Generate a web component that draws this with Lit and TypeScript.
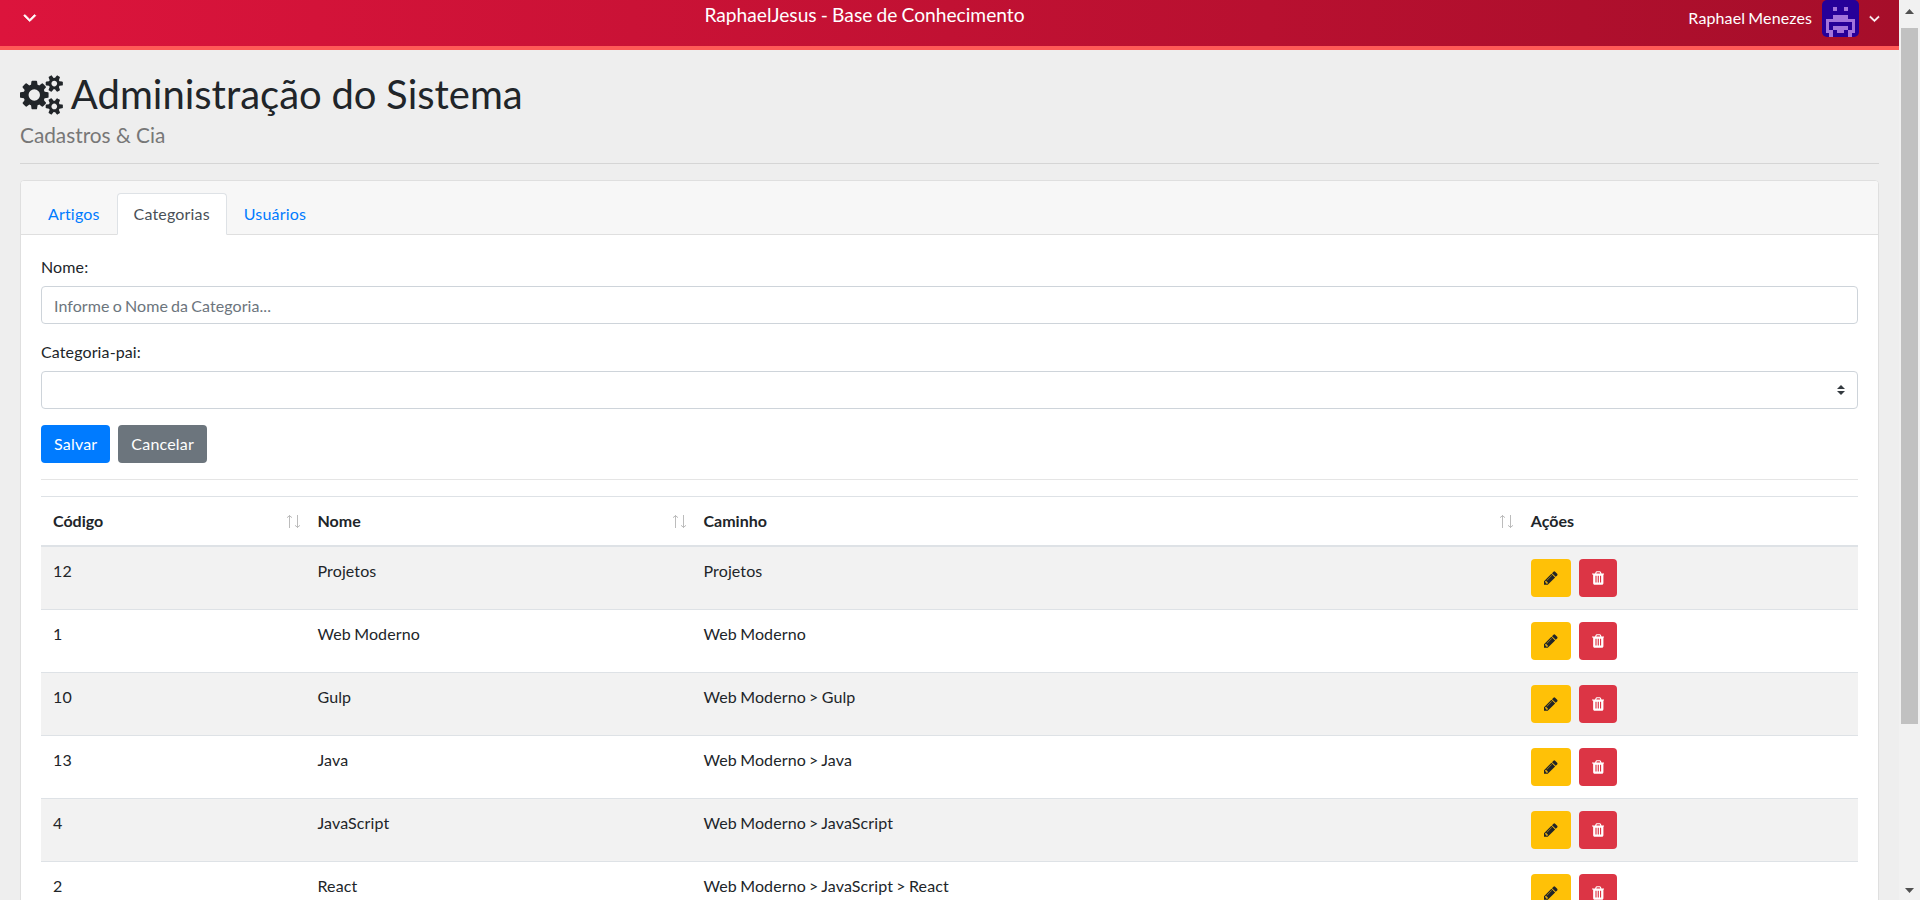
import { LitElement, html, css, svg } from "lit";
import { customElement, property } from "lit/decorators.js";

const ICONS: Record<string, { box: string; path: string }> = {
  angle: {
    box: "320 0 1152 1792",
    path: "M1395 736q0 13-10 23l-466 466q-10 10-23 10t-23-10l-466-466q-10-10-10-23t10-23l50-50q10-10 23-10t23 10l393 393 393-393q10-10 23-10t23 10l50 50q10 10 10 23z",
  },
  pencil: {
    box: "128 0 1536 1792",
    path: "M491 1536l91-91-235-235-91 91v107h128v128h107zm523-928q0-22-22-22-10 0-17 7l-542 542q-7 7-7 17 0 22 22 22 10 0 17-7l542-542q7-7 7-17zm-54-192l416 416-832 832h-416v-416zm683 96q0 53-37 90l-166 166-416-416 166-165q36-38 90-38 53 0 91 38l235 234q37 39 37 91z",
  },
  trash: {
    box: "192 0 1408 1792",
    path: "M704 1376v-704q0-14-9-23t-23-9h-64q-14 0-23 9t-9 23v704q0 14 9 23t23 9h64q14 0 23-9t9-23zm256 0v-704q0-14-9-23t-23-9h-64q-14 0-23 9t-9 23v704q0 14 9 23t23 9h64q14 0 23-9t9-23zm256 0v-704q0-14-9-23t-23-9h-64q-14 0-23 9t-9 23v704q0 14 9 23t23 9h64q14 0 23-9t9-23zm-544-992h448l-48-117q-7-9-17-11h-317q-10 2-17 11zm928 32v64q0 14-9 23t-23 9h-96v948q0 83-47 143.5t-113 60.5h-832q-66 0-113-58.5t-47-141.5v-952h-96q-14 0-23-9t-9-23v-64q0-14 9-23t23-9h309l70-167q15-37 54-63t79-26h320q40 0 79 26t54 63l70 167h309q14 0 23 9t9 23z",
  },
  cogs: {
    box: "0 0 1920 1792",
    path: "M896 896q0-106-75-181t-181-75-181 75-75 181 75 181 181 75 181-75 75-181zm768 512q0-52-38-90t-90-38-90 38-38 90q0 53 37.5 90.5t90.5 37.5 90.5-37.5 37.5-90.5zm0-1024q0-52-38-90t-90-38-90 38-38 90q0 53 37.5 90.5t90.5 37.5 90.5-37.5 37.5-90.5zm-384 421v185q0 10-7 19.5t-16 10.5l-155 24q-11 35-32 76 34 48 90 115 7 11 7 20 0 12-7 19-23 30-82.5 89.5t-78.5 59.5q-11 0-21-7l-115-90q-37 19-77 31-11 108-23 155-7 24-30 24h-186q-11 0-20-7.5t-10-17.5l-23-153q-34-10-75-31l-118 89q-7 7-20 7-11 0-21-8-144-133-144-160 0-9 7-19 10-14 41-53t47-61q-23-44-35-82l-152-24q-10-1-17-9.5t-7-19.5v-185q0-10 7-19.5t16-10.5l155-24q11-35 32-76-34-48-90-115-7-11-7-20 0-12 7-20 22-30 82-89t79-59q11 0 21 7l115 90q34-18 77-32 11-108 23-154 7-24 30-24h186q11 0 20 7.5t10 17.5l23 153q34 10 75 31l118-89q8-7 20-7 11 0 21 8 144 133 144 160 0 8-7 19-12 16-42 54t-45 60q23 48 34 82l152 23q10 2 17 10.5t7 19.5zm640 533v140q0 16-149 31-12 27-30 52 51 113 51 138 0 4-4 7-122 71-124 71-8 0-46-47t-52-68q-20 2-30 2t-30-2q-14 21-52 68t-46 47q-2 0-124-71-4-3-4-7 0-25 51-138-18-25-30-52-149-15-149-31v-140q0-16 149-31 13-29 30-52-51-113-51-138 0-4 4-7 4-2 35-20t59-34 30-16q8 0 46 46.5t52 67.5q20-2 30-2t30 2q51-71 92-112l6-2q4 0 124 70 4 3 4 7 0 25-51 138 17 23 30 52 149 15 149 31zm0-1024v140q0 16-149 31-12 27-30 52 51 113 51 138 0 4-4 7-122 71-124 71-8 0-46-47t-52-68q-20 2-30 2t-30-2q-14 21-52 68t-46 47q-2 0-124-71-4-3-4-7 0-25 51-138-18-25-30-52-149-15-149-31v-140q0-16 149-31 13-29 30-52-51-113-51-138 0-4 4-7 4-2 35-20t59-34 30-16q8 0 46 46.5t52 67.5q20-2 30-2t30 2q51-71 92-112l6-2q4 0 124 70 4 3 4 7 0 25-51 138 17 23 30 52 149 15 149 31z",
  },
};

@customElement("fa-icon")
export class FaIcon extends LitElement {
  @property() name = "angle";

  static styles = css`
    :host {
      display: inline-flex;
      height: 1em;
    }
    .glyph {
      display: block;
      height: 1em;
      width: auto;
      fill: currentColor;
    }
    .angle {
      stroke: currentColor;
      stroke-width: 70px;
    }
  `;

  render() {
    const icon = ICONS[this.name];
    return html`<svg class="glyph ${this.name}" viewBox=${icon.box}>${svg`<path d=${icon.path}></path>`}</svg>`;
  }
}

const FACE = [
  "..........",
  "..........",
  "...#..#...",
  "..........",
  "...####...",
  ".########.",
  ".#......#.",
  ".#.####.#.",
  ".##.##.##.",
  "..#....#..",
];

@customElement("user-avatar")
export class UserAvatar extends LitElement {
  static styles = css`
    :host {
      display: block;
      width: 37px;
      height: 37px;
      border-radius: 5px;
      overflow: hidden;
      background: #260099;
    }
    .face {
      display: block;
    }
  `;

  render() {
    return html`
      <svg class="face" width="37" height="37" viewBox="0 0 10 10" fill="#a274dc" shape-rendering="crispEdges">
        ${FACE.flatMap((line, y) =>
          [...line].map((c, x) => (c === "#" ? svg`<rect x=${x} y=${y} width="1" height="1"></rect>` : null)),
        )}
      </svg>
    `;
  }
}

@customElement("app-header")
export class AppHeader extends LitElement {
  static styles = css`
    :host {
      display: block;
    }
    .bar {
      box-sizing: border-box;
      height: 50px;
      display: grid;
      grid-template-columns: 60px 1fr 230px;
      align-items: start;
      background: linear-gradient(to right, #dc143c, #a60e2a) padding-box;
      border-bottom: 4px solid #ff5a57;
      color: #fff;
    }
    .toggle {
      display: flex;
      padding: 7px 0 0 23px;
      font-size: 21px;
    }
    .title {
      margin: 0;
      font-size: 19.2px;
      font-weight: 400;
      line-height: 30px;
      letter-spacing: 0;
      word-spacing: -0.75px;
      text-align: center;
    }
    .user {
      display: flex;
      justify-content: flex-end;
      align-items: center;
      height: 37px;
      padding-right: 19.5px;
      font-size: 16px;
    }
    .name {
      margin-top: -2px;
    }
    .user user-avatar {
      margin: 0 9.5px 0 10px;
    }
    .user fa-icon {
      font-size: 17px;
    }
  `;

  render() {
    return html`
      <header class="bar">
        <a class="toggle"><fa-icon name="angle"></fa-icon></a>
        <h1 class="title">RaphaelJesus - Base de Conhecimento</h1>
        <div class="user">
          <span class="name">Raphael Menezes</span>
          <user-avatar></user-avatar>
          <fa-icon name="angle"></fa-icon>
        </div>
      </header>
    `;
  }
}

interface Category {
  id: number;
  name: string;
  path: string;
}

@customElement("category-table")
export class CategoryTable extends LitElement {
  @property({ attribute: false }) rows: Category[] = [];

  static styles = css`
    :host {
      display: block;
    }
    .row {
      display: grid;
      grid-template-columns: 264.5px 386px 827.3px 1fr;
      border-top: 1px solid #dee2e6;
    }
    .head {
      border-bottom: 2px solid #dee2e6;
      font-weight: 700;
      letter-spacing: 0;
    }
    .body .row:first-child {
      border-top: 0;
    }
    .body .row:nth-child(odd) {
      background: #f2f2f2;
    }
    .cell {
      padding: 12px;
      line-height: 24px;
    }
    .sortable {
      display: flex;
      justify-content: space-between;
      padding-right: 4.5px;
    }
    .arrows {
      margin: 6px 0 0;
    }
    .actions {
      display: flex;
      gap: 8px;
    }
    .btn {
      box-sizing: border-box;
      height: 38px;
      padding: 0 13px;
      display: flex;
      align-items: center;
      border: 0;
      border-radius: 4px;
      font-size: 16px;
    }
    .edit {
      background: #ffc107;
      color: #212529;
    }
    .remove {
      background: #dc3545;
      color: #fff;
    }
  `;

  private heading(label: string) {
    return html`
      <div class="cell sortable">
        <span>${label}</span>
        <svg class="arrows" width="16" height="14" viewBox="0 0 16 14" fill="none" stroke="#bcbcbc">
          <path d="M4.5 0v13M2 2.7L4.5 .7L7 2.7M12.5 0v13M10 10.3L12.5 12.3L15 10.3"></path>
        </svg>
      </div>
    `;
  }

  render() {
    return html`
      <div class="row head">
        ${["Código", "Nome", "Caminho"].map((label) => this.heading(label))}
        <div class="cell">Ações</div>
      </div>
      <div class="body">
        ${this.rows.map(
          (row) => html`
            <div class="row">
              <div class="cell">${row.id}</div>
              <div class="cell">${row.name}</div>
              <div class="cell">${row.path}</div>
              <div class="cell actions">
                <button class="btn edit"><fa-icon name="pencil"></fa-icon></button>
                <button class="btn remove"><fa-icon name="trash"></fa-icon></button>
              </div>
            </div>
          `,
        )}
      </div>
    `;
  }
}

@customElement("page-scrollbar")
export class PageScrollbar extends LitElement {
  static styles = css`
    :host {
      box-sizing: border-box;
      display: flex;
      flex-direction: column;
      align-items: center;
      width: 21px;
      padding: 9px 0 7px;
      background: #f1f1f1;
    }
    .arrow {
      display: block;
      fill: #505050;
    }
    .thumb {
      width: 17px;
      height: 696px;
      margin: 14px 0 auto;
      background: #c1c1c1;
    }
  `;

  render() {
    return html`
      <svg class="arrow" width="9" height="5" viewBox="0 0 9 5"><path d="M0 5L4.5 0L9 5z"></path></svg>
      <div class="thumb"></div>
      <svg class="arrow" width="9" height="5" viewBox="0 0 9 5"><path d="M0 0L4.5 5L9 0z"></path></svg>
    `;
  }
}

@customElement("app-root")
export class AppRoot extends LitElement {
  private categories: Category[] = [
    { id: 12, name: "Projetos", path: "Projetos" },
    { id: 1, name: "Web Moderno", path: "Web Moderno" },
    { id: 10, name: "Gulp", path: "Web Moderno > Gulp" },
    { id: 13, name: "Java", path: "Web Moderno > Java" },
    { id: 4, name: "JavaScript", path: "Web Moderno > JavaScript" },
    { id: 2, name: "React", path: "Web Moderno > JavaScript > React" },
  ];

  static styles = css`
    :host {
      display: flex;
      height: 900px;
      overflow: hidden;
      font-family: Lato, "Liberation Sans", sans-serif;
      font-size: 16px;
      line-height: 1.5;
      letter-spacing: 0.12px;
      word-spacing: -1px;
      font-variant-ligatures: none;
      color: #212529;
    }
    .page {
      flex: 1;
      min-width: 0;
      overflow: hidden;
      background: #eee;
    }
    .content {
      padding: 20px;
    }
    .heading {
      display: flex;
      align-items: center;
      gap: 8px;
      height: 48px;
      margin: 0;
      font-size: 40px;
      font-weight: 400;
      line-height: 48px;
      letter-spacing: 0;
      word-spacing: -0.6px;
    }
    .heading fa-icon {
      margin-top: 1px;
    }
    .subtitle {
      height: 25px;
      margin: 4px 0 0;
      font-size: 20.8px;
      font-weight: 400;
      line-height: 26px;
      letter-spacing: 0;
      word-spacing: 0;
      color: #777;
    }
    .rule {
      height: 1px;
      margin: 16px 0;
      border: 0;
      background: rgba(0, 0, 0, 0.1);
    }
    .card {
      border: 1px solid #dfdfdf;
      border-radius: 4px;
      background: #fff;
    }
    .tabs {
      display: flex;
      height: 41px;
      padding: 12px 10px 0;
      border-bottom: 1px solid #dfdfdf;
      border-radius: 3px 3px 0 0;
      background: #f7f7f7;
      letter-spacing: 0.17px;
    }
    .tab {
      box-sizing: border-box;
      height: 42px;
      padding: 8px 16px;
      border: 1px solid transparent;
      color: #007bff;
    }
    .tab.active {
      border-color: #dee2e6 #dee2e6 #fff;
      border-radius: 4px 4px 0 0;
      background: #fff;
      color: #495057;
    }
    .form {
      padding: 20px;
    }
    .field {
      margin-bottom: 16px;
    }
    .label {
      display: block;
      height: 31px;
    }
    .control {
      box-sizing: border-box;
      display: flex;
      align-items: center;
      width: 100%;
      height: 38px;
      padding: 2px 12px 0;
      border: 1px solid #ced4da;
      border-radius: 4px;
      background: #fff;
      color: #6c757d;
      letter-spacing: 0.07px;
    }
    .select {
      justify-content: flex-end;
      padding-top: 0;
    }
    .buttons {
      display: flex;
      gap: 8px;
    }
    .btn {
      height: 38px;
      padding: 0 13px;
      border: 0;
      border-radius: 4px;
      font: inherit;
      letter-spacing: 0.2px;
      color: #fff;
    }
    .primary {
      background: #007bff;
    }
    .secondary {
      background: #6c757d;
    }
  `;

  render() {
    return html`
      <div class="page">
        <app-header></app-header>
        <main class="content">
          <h1 class="heading"><fa-icon name="cogs"></fa-icon>Administração do Sistema</h1>
          <h2 class="subtitle">Cadastros &amp; Cia</h2>
          <div class="rule"></div>
          <section class="card">
            <nav class="tabs">
              <a class="tab">Artigos</a>
              <a class="tab active">Categorias</a>
              <a class="tab">Usuários</a>
            </nav>
            <div class="form">
              <div class="field">
                <span class="label">Nome:</span>
                <div class="control">Informe o Nome da Categoria...</div>
              </div>
              <div class="field">
                <span class="label">Categoria-pai:</span>
                <div class="control select">
                  <svg width="8" height="10" viewBox="0 0 4 5" fill="#343a40"><path d="M2 0L0 2h4zm0 5L0 3h4z"></path></svg>
                </div>
              </div>
              <div class="buttons">
                <button class="btn primary">Salvar</button>
                <button class="btn secondary">Cancelar</button>
              </div>
              <div class="rule"></div>
              <category-table .rows=${this.categories}></category-table>
            </div>
          </section>
        </main>
      </div>
      <page-scrollbar></page-scrollbar>
    `;
  }
}
